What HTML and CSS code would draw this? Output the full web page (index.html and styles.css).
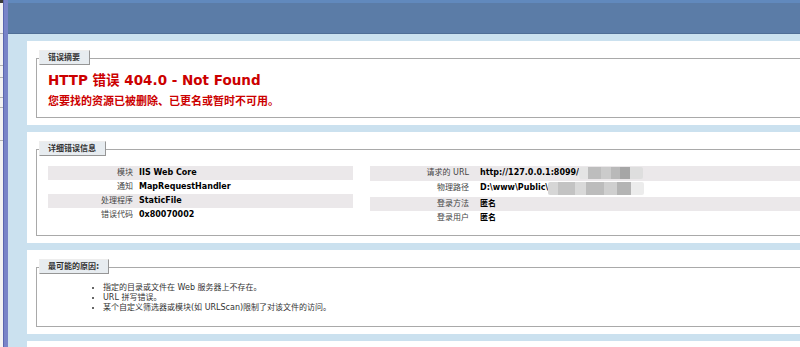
FILE: index.html
```html
<!DOCTYPE html>
<html lang="zh-CN">
<head>
  <meta charset="UTF-8">
  <title>IIS 8.5 详细错误 - 404.0 - Not Found</title>
  <link rel="stylesheet" href="styles.css">
</head>
<body>
  <div class="edge">
    <i class="line l1"></i>
    <i class="line l2"></i>
    <i class="line l3"></i>
    <i class="line l4"></i>
    <i class="line l5"></i>
    <i class="line l6"></i>
  </div>
  <div class="stripe"></div>
  <div class="page">
    <div class="header"></div>
    <div class="content">
      <div class="panel">
        <div class="box">
          <h3 class="tag">错误摘要</h3>
          <h2 class="error-title">HTTP 错误 404.0 - Not Found</h2>
          <p class="error-text">您要找的资源已被删除、已更名或暂时不可用。</p>
        </div>
      </div>

      <div class="panel">
        <div class="box">
          <h3 class="tag">详细错误信息</h3>
          <div class="details">
            <div class="details-left">
              <div class="row alt"><span class="label">模块</span><span class="value">IIS Web Core</span></div>
              <div class="row"><span class="label">通知</span><span class="value">MapRequestHandler</span></div>
              <div class="row alt"><span class="label">处理程序</span><span class="value">StaticFile</span></div>
              <div class="row"><span class="label">错误代码</span><span class="value">0x80070002</span></div>
            </div>
            <div class="details-right">
              <div class="row alt"><span class="label">请求的 URL</span><span class="value">http://127.0.0.1:8099/<span class="blur blur-url"></span></span></div>
              <div class="row"><span class="label">物理路径</span><span class="value">D:\www\Public\<span class="blur blur-path"></span></span></div>
              <div class="row alt"><span class="label">登录方法</span><span class="value">匿名</span></div>
              <div class="row"><span class="label">登录用户</span><span class="value">匿名</span></div>
            </div>
          </div>
        </div>
      </div>

      <div class="panel">
        <div class="box">
          <h3 class="tag">最可能的原因:</h3>
          <ul class="causes">
            <li>指定的目录或文件在 Web 服务器上不存在。</li>
            <li>URL 拼写错误。</li>
            <li>某个自定义筛选器或模块(如 URLScan)限制了对该文件的访问。</li>
          </ul>
        </div>
      </div>

      <div class="panel panel-empty"></div>
    </div>
  </div>
</body>
</html>
```

FILE: styles.css
```css
body {
  margin: 0;
  display: flex;
  height: 100vh;
  overflow: hidden;
  font-family: 'DejaVu Sans', 'Noto Sans CJK SC', sans-serif;
  background-color: #cbe1ef;
}

.edge {
  width: 3px;
  flex: none;
  background-color: #f3f3f3;
  border-top: 3px solid #3c3c3c;
}

.line {
  display: block;
  height: 1px;
  background-color: #b4b4b4;
}

.l1 { margin-top: 30px; }
.l2 { margin-top: 31px; }
.l3 { margin-top: 11px; }
.l4 { margin-top: 19px; }
.l5 { margin-top: 9px; }
.l6 { margin-top: 32px; }

.stripe {
  width: 4px;
  flex: none;
  background-color: #7884c8;
  border-left: 1px solid #5a66b0;
}

.page {
  flex: 1;
  min-width: 0;
  overflow: hidden;
}

.header {
  height: 30px;
  background-color: #5b7ca7;
  border-top: 3px solid #6189bd;
  border-bottom: 1px solid #4f6e96;
}

.content {
  padding: 7px 0 0 19px;
}

.panel {
  box-sizing: border-box;
  width: 913px;
  padding: 17px 9px 7px;
  margin-bottom: 7px;
  background-color: #ffffff;
}

.panel-empty {
  height: 60px;
}

.box {
  border: 1px solid #a9a9a9;
  padding: 0 11px;
}

.tag {
  display: table;
  margin: -9px 0 0 -9px;
  padding: 2px 9px 2px 8px;
  font-size: 8px;
  line-height: 9px;
  font-weight: bold;
  color: #333333;
  background-color: #e7ecf0;
  border-top: 1px solid #ededed;
  border-left: 1px solid #ededed;
  border-right: 1px solid #969696;
  border-bottom: 1px solid #969696;
}

.error-title {
  margin: 7px 0 0;
  font-size: 13.5px;
  line-height: 16px;
  font-weight: bold;
  color: #cc0000;
}

.error-text {
  margin: 7px 0 8px;
  font-size: 11px;
  line-height: 14px;
  font-weight: bold;
  color: #cc0000;
}

.details {
  display: flex;
  margin: 10px 0;
  font-size: 8px;
  line-height: 10px;
}

.details-left {
  width: 305px;
  margin-right: 17px;
}

.details-right {
  width: 549px;
}

.row {
  display: grid;
  grid-template-columns: 85px 1fr;
  column-gap: 6px;
  padding: 2px 0;
}

.details-right .row {
  grid-template-columns: 99px 1fr;
  column-gap: 11px;
}

.row.alt {
  background-color: #ebe8ea;
}

.label {
  text-align: right;
  color: #444444;
}

.value {
  font-weight: bold;
  color: #000000;
  white-space: nowrap;
}

.blur {
  display: inline-block;
  vertical-align: top;
  height: 12px;
  margin-top: -1px;
  border-radius: 2px;
}

.blur-url {
  width: 64px;
  background: linear-gradient(90deg, #e4e4e4 0 14%, #bdbdbd 14% 34%, #cbcbcb 34% 50%, #b9b9b9 50% 64%, #a6a6a6 64% 80%, #dedede 80%);
}

.blur-path {
  width: 96px;
  height: 13px;
  background: linear-gradient(90deg, #d6d6d6 0 10%, #c3c3c3 10% 28%, #d9d9d9 28% 40%, #bcbcbc 40% 58%, #cfcfcf 58% 72%, #b4b4b4 72% 86%, #ececec 86%);
}

.causes {
  margin: 9px 0 13px;
  padding-left: 55px;
  font-size: 8px;
  line-height: 10px;
  color: #333333;
}
```
